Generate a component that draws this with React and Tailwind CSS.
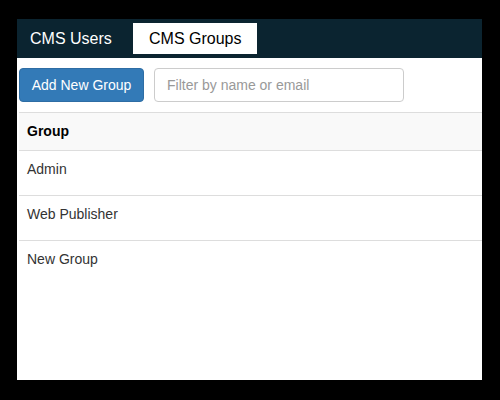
export default function App() {
  const rows = ["Admin", "Web Publisher", "New Group"];
  return (
    <div
      className="w-[500px] h-[400px] bg-black pt-[19px] pl-[17px]"
      style={{ fontFamily: '"Liberation Sans", Arial, sans-serif' }}
    >
      <div className="w-[465px] h-[361px] bg-white flex flex-col">
        <div className="h-[39px] bg-[#0b2430] flex items-start pt-[4px]">
          <div className="w-[116px] h-[31px] pl-[13px] flex items-center text-[16px] text-white">
            CMS Users
          </div>
          <div className="w-[124px] h-[31px] pl-[16px] flex items-center text-[16px] text-black bg-white">
            CMS Groups
          </div>
        </div>
        <div className="flex items-start pt-[10px] pl-[2px] h-[54px] gap-[10px]">
          <button className="w-[125px] h-[34px] rounded-[4px] bg-[#337ab7] border border-[#2e6da4] text-white text-[14px] flex items-center justify-center">
            Add New Group
          </button>
          <div className="w-[250px] h-[34px] rounded-[4px] border border-[#ccc] flex items-center pl-[12px] text-[14px] text-[#999]">
            Filter by name or email
          </div>
        </div>
        <div className="ml-[2px] flex flex-col">
          <div className="h-[39px] border-t border-b border-[#ddd] bg-[#f9f9f9] pt-[8px] pl-[8px] text-[14px] leading-[20px] font-bold text-black">
            Group
          </div>
          {rows.map((r, i) => (
            <div
              key={r}
              className={
                i < rows.length - 1
                  ? "h-[45px] border-b border-[#ddd] pt-[8px] pl-[8px] text-[14px] leading-[20px] text-[#333]"
                  : "h-[45px] pt-[8px] pl-[8px] text-[14px] leading-[20px] text-[#333]"
              }
            >
              {r}
            </div>
          ))}
        </div>
      </div>
    </div>
  );
}
